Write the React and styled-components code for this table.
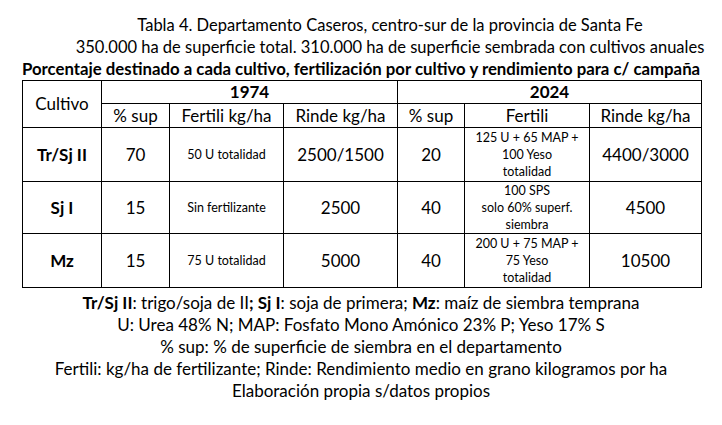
import styled, { createGlobalStyle } from 'styled-components'

const GlobalStyle = createGlobalStyle`
  html, body {
    margin: 0;
    padding: 0;
    background: #fff;
  }
  body {
    font-family: Lato, "Open Sans", "Liberation Sans", sans-serif;
    color: #000;
  }
`;

const Page = styled.div`
  width: 722px;
  height: 425px;
  padding-top: 14px;
  box-sizing: border-box;
  overflow: hidden;
`;

const Title = styled.div`
  padding-left: ${p => p.$shift || 0}px;
  text-align: center;
  font-size: ${p => (p.$bold ? 16.8 : 16.5)}px;
  line-height: 22px;
  font-weight: ${p => (p.$bold ? 700 : 400)};
  white-space: nowrap;
`;

const Table = styled.table`
  margin: 0 0 0 22px;
  border-collapse: collapse;
  table-layout: fixed;
  width: 680px;
`;

const Cell = styled.td`
  border: 1px solid #000;
  padding: 0;
  text-align: center;
  vertical-align: middle;
  font-size: ${p => (p.$small ? 12.5 : 17)}px;
  line-height: ${p => (p.$small ? 17 : 20)}px;
  font-weight: ${p => (p.$bold ? 700 : 400)};
  height: ${p => p.$h || 'auto'};
`;

const Notes = styled.div`
  padding-top: 4px;
  text-align: center;
  font-size: 17px;
  line-height: 22px;
  white-space: nowrap;
`;

const B = styled.b`
  font-weight: 700;
`;

const widths = [79, 68, 114, 114, 67, 125, 112];

const rows = [
  {
    crop: 'Tr/Sj II', h: 53,
    a: ['70', '50 U totalidad', '2500/1500'],
    b: ['20', ['125 U + 65 MAP +', '100 Yeso', 'totalidad'], '4400/3000'],
  },
  {
    crop: 'Sj I', h: 51,
    a: ['15', 'Sin fertilizante', '2500'],
    b: ['40', ['100 SPS', 'solo 60% superf.', 'siembra'], '4500'],
  },
  {
    crop: 'Mz', h: 53,
    a: ['15', '75 U totalidad', '5000'],
    b: ['40', ['200 U + 75 MAP +', '75 Yeso', 'totalidad'], '10500'],
  },
];

function Lines({ items }) {
  return items.map((t, i) => <div key={i}>{t}</div>);
}

export default function App() {
  return (
    <Page>
      <GlobalStyle />
      <Title $shift={58}>Tabla 4. Departamento Caseros, centro-sur de la provincia de Santa Fe</Title>
      <Title $shift={58}>350.000 ha de superficie total. 310.000 ha de superficie sembrada con cultivos anuales</Title>
      <Title $bold>Porcentaje destinado a cada cultivo, fertilización por cultivo y rendimiento para c/ campaña</Title>

      <Table>
        <colgroup>
          {widths.map((w, i) => <col key={i} style={{ width: w }} />)}
        </colgroup>
        <tbody>
          <tr>
            <Cell rowSpan={2}>Cultivo</Cell>
            <Cell colSpan={3} $bold $h="22px">1974</Cell>
            <Cell colSpan={3} $bold>2024</Cell>
          </tr>
          <tr>
            <Cell $h="23px">% sup</Cell>
            <Cell>Fertili kg/ha</Cell>
            <Cell>Rinde kg/ha</Cell>
            <Cell>% sup</Cell>
            <Cell>Fertili</Cell>
            <Cell>Rinde kg/ha</Cell>
          </tr>
          {rows.map(r => (
            <tr key={r.crop}>
              <Cell $bold $h={r.h + 'px'}>{r.crop}</Cell>
              <Cell>{r.a[0]}</Cell>
              <Cell $small>{r.a[1]}</Cell>
              <Cell>{r.a[2]}</Cell>
              <Cell>{r.b[0]}</Cell>
              <Cell $small><Lines items={r.b[1]} /></Cell>
              <Cell>{r.b[2]}</Cell>
            </tr>
          ))}
        </tbody>
      </Table>

      <Notes>
        <div><B>Tr/Sj II</B>: trigo/soja de II<B>; Sj I</B>: soja de primera; <B>Mz</B>: maíz de siembra temprana</div>
        <div>U: Urea 48% N; MAP: Fosfato Mono Amónico 23% P; Yeso 17% S</div>
        <div>% sup: % de superficie de siembra en el departamento</div>
        <div>Fertili: kg/ha de fertilizante; Rinde: Rendimiento medio en grano kilogramos por ha</div>
        <div>Elaboración propia s/datos propios</div>
      </Notes>
    </Page>
  );
}
